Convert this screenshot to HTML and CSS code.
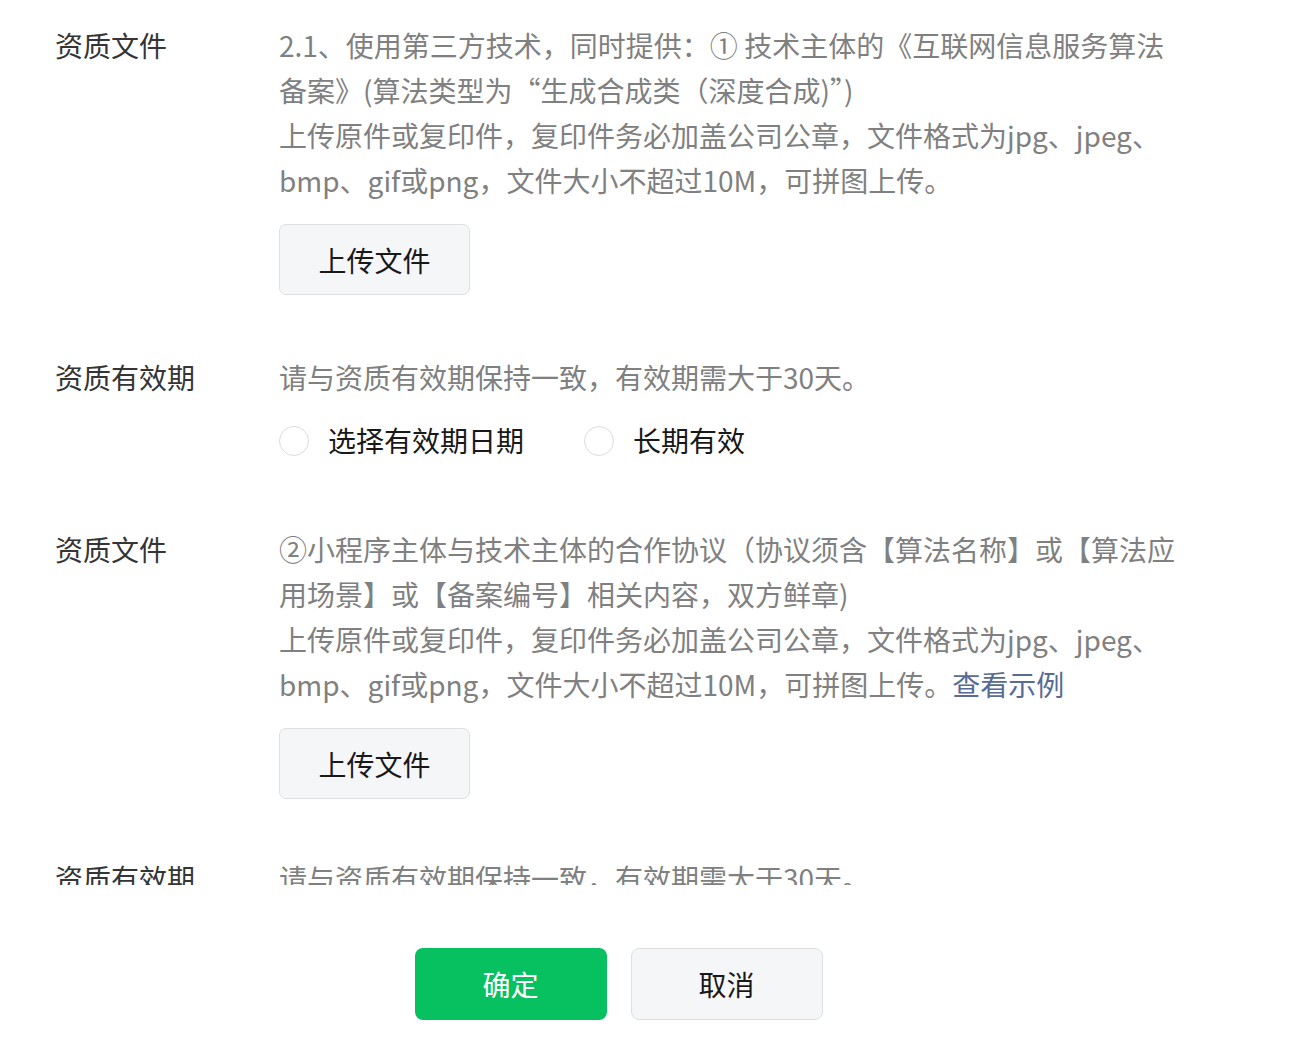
FILE: index.html
```html
<!DOCTYPE html>
<html lang="zh-CN">
<head>
<meta charset="utf-8">
<title>资质文件</title>
<link rel="stylesheet" href="styles.css">
</head>
<body>
<div class="dialog">
  <div class="scroll">
    <div class="field field-file">
      <div class="label">资质文件</div>
      <div class="content">
        <p class="desc">2.1、使用第三方技术，同时提供：① 技术主体的《互联网信息服务算法备案》(算法类型为“生成合成类（深度合成)”)</p>
        <p class="desc">上传原件或复印件，复印件务必加盖公司公章，文件格式为jpg、jpeg、bmp、gif或png，文件大小不超过10M，可拼图上传。</p>
        <button class="btn-upload" type="button">上传文件</button>
      </div>
    </div>

    <div class="field field-date">
      <div class="label">资质有效期</div>
      <div class="content">
        <p class="desc">请与资质有效期保持一致，有效期需大于30天。</p>
        <div class="radios">
          <label class="radio"><span class="circle"></span><span class="radio-text">选择有效期日期</span></label>
          <label class="radio"><span class="circle"></span><span class="radio-text">长期有效</span></label>
        </div>
      </div>
    </div>

    <div class="field field-file2">
      <div class="label">资质文件</div>
      <div class="content">
        <p class="desc">②小程序主体与技术主体的合作协议（协议须含【算法名称】或【算法应用场景】或【备案编号】相关内容，双方鲜章)</p>
        <p class="desc"><span>上传原件或复印件，复印件务必加盖公司公章，文件格式为jpg、jpeg、bmp、gif或png，文件大小不超过10M，可拼图上传。</span><a class="link" href="#">查看示例</a></p>
        <button class="btn-upload" type="button">上传文件</button>
      </div>
    </div>

    <div class="field">
      <div class="label">资质有效期</div>
      <div class="content">
        <p class="desc">请与资质有效期保持一致，有效期需大于30天。</p>
      </div>
    </div>
  </div>

  <div class="footer">
    <button class="btn btn-primary" type="button">确定</button>
    <button class="btn btn-default" type="button">取消</button>
  </div>
</div>
</body>
</html>
```

FILE: styles.css
```css
html, body {
  margin: 0;
  padding: 0;
  background: #ffffff;
}

body {
  font-family: "PingFang SC", "Noto Sans CJK SC", "Noto Sans", sans-serif;
  font-size: 28px;
  line-height: 45px;
  color: #353535;
}

.dialog {
  width: 1237px;
  height: 1040px;
  display: flex;
  flex-direction: column;
}

.scroll {
  height: 885px;
  overflow: hidden;
  padding-top: 23px;
  box-sizing: border-box;
}

.field {
  display: grid;
  grid-template-columns: 224px 900px;
  padding-left: 55px;
}

.field-file {
  margin-bottom: 60px;
}

.field-date {
  margin-bottom: 64px;
}

.field-file2 {
  margin-bottom: 57px;
}

.label {
  color: #353535;
  white-space: nowrap;
}

.content {
  display: flex;
  flex-direction: column;
  align-items: flex-start;
}

.desc {
  margin: 0;
  color: #808080;
}

.link {
  color: #576b95;
  text-decoration: none;
}

.btn-upload {
  margin-top: 21px;
  width: 191px;
  height: 71px;
  box-sizing: border-box;
  border: 1.5px solid #dedfe0;
  border-radius: 7px;
  background: #f5f6f8;
  font-family: inherit;
  font-size: 28px;
  color: #191919;
  padding: 0;
}

.radios {
  margin-top: 18px;
  display: flex;
  gap: 60px;
}

.radio {
  display: flex;
  align-items: center;
  gap: 19px;
  color: #191919;
}

.circle {
  width: 30px;
  height: 30px;
  box-sizing: border-box;
  border: 1.5px solid #dcdcdc;
  border-radius: 50%;
}

.footer {
  display: flex;
  justify-content: center;
  gap: 24px;
  padding-top: 63px;
}

.btn {
  width: 192px;
  height: 72px;
  box-sizing: border-box;
  border-radius: 8px;
  font-family: inherit;
  font-size: 28px;
  padding: 0;
}

.btn-primary {
  background: #07c160;
  border: none;
  color: #ffffff;
}

.btn-default {
  background: #f5f6f8;
  border: 1.5px solid #dedfe0;
  color: #191919;
}
```
